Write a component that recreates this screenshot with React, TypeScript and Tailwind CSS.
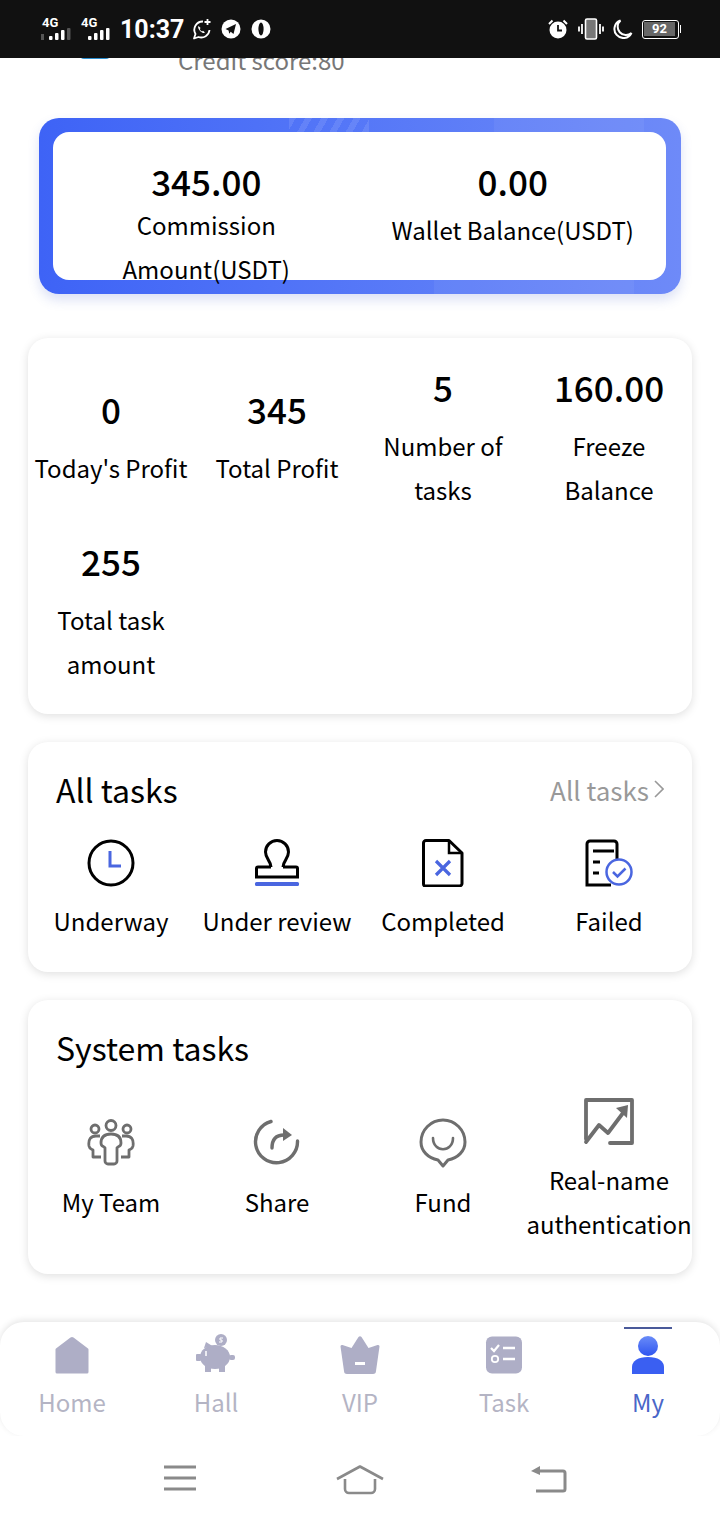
import React from 'react';

const font = { fontFamily: '"Noto Sans CJK SC", "Noto Sans", sans-serif' };

const stats = [
  { value: '0', label: "Today's Profit" },
  { value: '345', label: 'Total Profit' },
  { value: '5', label: 'Number of tasks' },
  { value: '160.00', label: 'Freeze Balance' },
  { value: '255', label: 'Total task amount' },
];

function Signal({ dim }: { dim?: boolean }) {
  return (
    <div className="relative w-[32px] h-[24px]">
      <span className="absolute left-[1px] top-[-3px] text-[13px] font-bold text-white leading-[18px]" style={{ fontFamily: 'Roboto, sans-serif' }}>4G</span>
      <svg width="32" height="24" viewBox="0 0 32 24" className="absolute left-0 top-0">
        {dim && <rect x="0" y="17" width="3" height="6" fill="#555" />}
        <rect x="8" y="19" width="3.5" height="4" rx="1" fill="#fff" />
        <rect x="14" y="16" width="3.5" height="7" rx="1" fill="#fff" />
        <rect x="20" y="13" width="3.5" height="10" rx="1" fill="#fff" />
        <rect x="26" y="11" width="3.5" height="12" rx="1" fill={dim ? '#555' : '#fff'} />
      </svg>
    </div>
  );
}

function StatusBar() {
  return (
    <div className="h-[58px] bg-[#111111] flex items-center justify-between pl-[41px] pr-[39px] relative z-10">
      <div className="flex items-center">
        <Signal dim />
        <div className="ml-[7px]"><Signal /></div>
        <span className="ml-[8px] text-[25px] font-bold text-white leading-none" style={{ fontFamily: 'Roboto, sans-serif' }}>10:37</span>
        <svg className="ml-[7px]" width="21" height="22" viewBox="0 0 21 22" fill="none" stroke="#fff" strokeWidth="1.800">
          <path d="M12 3.500A8.300 8.300 0 0 0 4.500 16L3 20.500l4.500-1.500A8.300 8.300 0 0 0 18.500 12" strokeLinejoin="round" />
          <path d="M7.500 8c-1 1 0 3.500 1.800 5.200S13 15.500 14 14.500l-2-1.800-1 .7c-1-.4-1.800-1.300-2.200-2.300l.8-1z" fill="#fff" stroke="none" />
          <path d="M16.500 1v6M13.500 4h6" />
        </svg>
        <svg className="ml-[9px]" width="20" height="20" viewBox="0 0 20 20">
          <circle cx="10" cy="10" r="9.500" fill="#fff" />
          <path d="M4.500 10L15 5l-2.500 10-2.800-2.200-1.500 2-.6-3.400z" fill="#111" />
        </svg>
        <svg className="ml-[10px]" width="20" height="20" viewBox="0 0 20 20">
          <circle cx="10" cy="10" r="9.500" fill="#fff" />
          <ellipse cx="10" cy="10" rx="2.600" ry="6.500" fill="#111" />
        </svg>
      </div>
      <div className="flex items-center">
        <svg width="22" height="22" viewBox="0 0 22 22">
          <circle cx="11" cy="12" r="8.500" fill="#fff" />
          <path d="M11 7v5.500h4" stroke="#111" strokeWidth="1.800" fill="none" />
          <path d="M2 6l3.500-3.500M20 6l-3.500-3.500" stroke="#fff" strokeWidth="2" />
        </svg>
        <svg className="ml-[9px]" width="26" height="22" viewBox="0 0 26 22">
          <rect x="7.500" y="1" width="11" height="20" rx="1.500" fill="#777" stroke="#fff" strokeWidth="1.600" />
          <path d="M4 6v10M1 8.500v5M22 6v10M25 8.500v5" stroke="#fff" strokeWidth="1.800" />
        </svg>
        <svg className="ml-[9px]" width="20" height="20" viewBox="0 0 20 20" fill="none" stroke="#fff" strokeWidth="2">
          <path d="M7.500 1.500A9 9 0 1 0 18.500 14 8 8 0 0 1 7.500 1.500z" />
        </svg>
        <div className="ml-[9px] w-[37px] h-[19px] rounded-[3px] border-[1.5px] border-white bg-[#111111] p-[1.5px]">
          <div className="w-[31px] h-full bg-[#666666] text-white text-[13px] font-bold leading-[13px] text-center" style={{ fontFamily: 'Roboto, sans-serif' }}>92</div>
        </div>
        <div className="ml-[1px] w-[1.5px] h-[8px] bg-white" />
      </div>
    </div>
  );
}

function BalanceCard() {
  return (
    <div className="relative mx-[39px] mt-[39px] h-[176px] rounded-[20px] p-[14px] pr-[15px] bg-gradient-to-r from-[#3e63f6] to-[#6e8af8] shadow-[0_6px_12px_rgba(60,90,200,0.18)]">
      {/* faint pattern on the frame */}
      <div className="absolute left-[250px] top-0 w-[80px] h-[14px] bg-[repeating-linear-gradient(120deg,rgba(255,255,255,0.10)_0px,rgba(255,255,255,0.10)_6px,transparent_6px,transparent_14px)]" />
      <div className="absolute left-[455px] top-0 w-[150px] h-[14px] bg-white/5" />
      <div className="absolute left-[395px] bottom-0 w-[200px] h-[14px] bg-white/5" />
      <div className="relative h-[148px] rounded-[16px] bg-white grid grid-cols-2 text-center text-black">
        <div className="pt-[25px] px-[60px]">
          <div className="text-[35px] font-medium leading-[54px] -mt-[3px]">345.00</div>
          <div className="text-[24px] leading-[44px] -mt-[5px] whitespace-nowrap">Commission<br />Amount(USDT)</div>
        </div>
        <div className="pt-[25px]">
          <div className="text-[35px] font-medium leading-[54px] -mt-[3px]">0.00</div>
          <div className="text-[24px] leading-[44px] whitespace-nowrap">Wallet Balance(USDT)</div>
        </div>
      </div>
    </div>
  );
}

function StatsCard() {
  return (
    <div className="mx-[28px] mt-[44px] h-[376px] rounded-[20px] bg-white shadow-[0_2px_10px_rgba(0,0,0,0.13)] pt-[23px] grid grid-cols-4 auto-rows-[150px] gap-y-[24px] content-start text-center text-black">
      {stats.map((s) => (
        <div key={s.label} className="flex flex-col justify-center">
          <div className="text-[35px] font-medium leading-[54px]">{s.value}</div>
          <div className="text-[24px] leading-[44px] mt-[10px]">{s.label}</div>
        </div>
      ))}
    </div>
  );
}

const blue = '#4a66e0';

const ClockIcon = () => (
  <svg width="48" height="48" viewBox="0 0 48 48" fill="none">
    <circle cx="24" cy="24" r="22" stroke="#000" strokeWidth="3" />
    <path d="M23 12v15h11" stroke={blue} strokeWidth="3" />
  </svg>
);
const StampIcon = () => (
  <svg width="48" height="48" viewBox="0 0 48 48" fill="none">
    <path d="M18 28c0-6-5.500-8-5.500-15a11.500 11.500 0 0 1 23 0c0 7-5.500 9-5.500 15M18 28H5a1.500 1.500 0 0 0-1.500 1.500V38h41v-8.500A1.500 1.500 0 0 0 43 28H30" stroke="#000" strokeWidth="3" />
    <rect x="2" y="43" width="44" height="4" rx="1.500" fill={blue} />
  </svg>
);
const FileXIcon = () => (
  <svg width="48" height="48" viewBox="0 0 48 48" fill="none">
    <path d="M30 1.500H7a2.500 2.500 0 0 0-2.500 2.500v41a2 2 0 0 0 2 2h34a2.500 2.500 0 0 0 2.500-2.500V14z" stroke="#000" strokeWidth="3" strokeLinejoin="round" />
    <path d="M30 2v12h13" stroke="#000" strokeWidth="2.500" />
    <path d="M17 22l14 14M31 22L17 36" stroke={blue} strokeWidth="3.200" />
  </svg>
);
const ListCheckIcon = () => (
  <svg width="50" height="48" viewBox="0 0 50 48" fill="none">
    <path d="M33 28V5a3 3 0 0 0-3-3H6a3 3 0 0 0-3 3v41h24" stroke="#000" strokeWidth="3" />
    <path d="M9 12h21M9 23h7M9 34h6" stroke="#000" strokeWidth="3" />
    <circle cx="35" cy="33" r="12.500" fill="#fff" stroke={blue} strokeWidth="2.500" />
    <path d="M29 33l4.500 4.500 8-8" stroke={blue} strokeWidth="2.500" />
  </svg>
);

function TasksCard() {
  const items = [
    { label: 'Underway', icon: <ClockIcon /> },
    { label: 'Under review', icon: <StampIcon /> },
    { label: 'Completed', icon: <FileXIcon /> },
    { label: 'Failed', icon: <ListCheckIcon /> },
  ];
  return (
    <div className="mx-[28px] mt-[28px] h-[230px] rounded-[20px] bg-white shadow-[0_2px_10px_rgba(0,0,0,0.13)] pt-[22px] text-black">
      <div className="flex items-center justify-between px-[28px] h-[50px]">
        <span className="text-[32px] leading-[50px]">All tasks</span>
        <span className="flex items-center text-[26px] text-[#999999]">
          All tasks
          <svg className="ml-[5px]" width="10" height="20" viewBox="0 0 10 20" fill="none" stroke="#999" strokeWidth="1.600"><path d="M1 2l8 8-8 8" /></svg>
        </span>
      </div>
      <div className="grid grid-cols-4 text-center mt-[25px]">
        {items.map((it) => (
          <div key={it.label} className="flex flex-col items-center">
            <div className="h-[48px] flex items-center justify-center">{it.icon}</div>
            <div className="text-[24px] leading-[44px] mt-[12px] whitespace-nowrap">{it.label}</div>
          </div>
        ))}
      </div>
    </div>
  );
}

const TeamIcon = () => (
  <svg width="48" height="48" viewBox="0 0 48 48" fill="none" stroke="#6e6e6e" strokeWidth="2.800" strokeLinejoin="round">
    <circle cx="24" cy="6.500" r="5" />
    <circle cx="8" cy="10" r="4" />
    <circle cx="40" cy="10" r="4" />
    <path d="M14 24c0-6 3-9 10-9s10 3 10 9c0 4-3 3-4 5v13a3 3 0 0 1-3 3h-6a3 3 0 0 1-3-3V29c-1-2-4-1-4-5z" />
    <path d="M13 17H9c-5 0-8 3-7 10 .5 3 2 3 4 4v7h8M35 17h4c5 0 8 3 7 10-.5 3-2 3-4 4v7h-8" />
  </svg>
);
const ShareIcon = () => (
  <svg width="48" height="48" viewBox="0 0 48 48" fill="none" stroke="#6e6e6e" strokeWidth="3.400" strokeLinecap="round">
    <path d="M18 2.500A21 21 0 1 0 44.500 22" />
    <path d="M19 29c0-8 3-13 12-13" />
    <path d="M30 9l9 7-9 6z" fill="#6e6e6e" stroke="none" />
  </svg>
);
const FundIcon = () => (
  <svg width="48" height="50" viewBox="0 0 48 50" fill="none" stroke="#6e6e6e" strokeWidth="3">
    <path d="M24 48l-5-6C9 40 2 33 2 24a22 22 0 0 1 44 0c0 9-7 16-17 18z" strokeLinejoin="round" />
    <path d="M14 20c0 15 20 15 20 0" strokeLinecap="round" strokeWidth="2.600" />
  </svg>
);
const ChartIcon = () => (
  <svg width="52" height="48" viewBox="0 0 52 48" fill="none" stroke="#6e6e6e" strokeWidth="3.800" strokeLinejoin="round" strokeLinecap="round">
    <path d="M3 42V3h46v43H27" />
    <path d="M3 45l13-17 9 8 15-20" />
    <path d="M33 11l12-3-1 13z" fill="#6e6e6e" stroke="none" />
  </svg>
);

function SystemCard() {
  const items = [
    { label: 'My Team', icon: <TeamIcon /> },
    { label: 'Share', icon: <ShareIcon /> },
    { label: 'Fund', icon: <FundIcon /> },
    { label: 'Real-name authentication', icon: <ChartIcon /> },
  ];
  return (
    <div className="mx-[28px] mt-[28px] h-[274px] rounded-[20px] bg-white shadow-[0_2px_10px_rgba(0,0,0,0.13)] pt-[22px] text-black">
      <div className="px-[28px] text-[32px] leading-[50px]">System tasks</div>
      <div className="grid grid-cols-4 text-center mt-[24px] h-[150px]">
        {items.map((it) => (
          <div key={it.label} className="flex flex-col items-center justify-center">
            <div className="h-[48px] flex items-center justify-center">{it.icon}</div>
            <div className="text-[24px] leading-[44px] mt-[13px]">{it.label}</div>
          </div>
        ))}
      </div>
    </div>
  );
}

const grey = '#aeaec6';

function BottomNav() {
  const items = [
    {
      label: 'Home',
      icon: (
        <svg width="36" height="38" viewBox="0 0 36 38"><path d="M16.500 1.500a2.500 2.500 0 0 1 3 0L34 12.500a1.500 1.500 0 0 1 .5 1.200V36a1.500 1.500 0 0 1-1.500 1.500H3A1.500 1.500 0 0 1 1.500 36V13.700a1.500 1.500 0 0 1 .5-1.200z" fill={grey} /></svg>
      ),
    },
    {
      label: 'Hall',
      icon: (
        <svg width="40" height="40" viewBox="0 0 40 40">
          <ellipse cx="19" cy="23" rx="15" ry="12" fill={grey} />
          <path d="M8 14l2-6 8 5zM9 32h6v6H9zM23 32h6v6h-6z" fill={grey} />
          <rect x="0" y="20" width="5" height="7" rx="1" fill={grey} />
          <rect x="33" y="21" width="6" height="5" rx="2" fill={grey} />
          <circle cx="25" cy="6" r="6" fill={grey} />
          <path d="M27 4h-3v2h2v2h-3" fill="none" stroke="#fff" strokeWidth="1" />
          <path d="M10 17v5" stroke="#fff" strokeWidth="1.500" />
        </svg>
      ),
    },
    {
      label: 'VIP',
      icon: (
        <svg width="40" height="38" viewBox="0 0 40 38">
          <path d="M18.500 1a2 2 0 0 1 3 0l7 11 9-3a1.500 1.500 0 0 1 2 1.500L36 35a3 3 0 0 1-3 3H7a3 3 0 0 1-3-3L.5 10.500a1.500 1.500 0 0 1 2-1.500l9 3z" fill={grey} />
          <rect x="15" y="26" width="10" height="3" fill="#fff" />
        </svg>
      ),
    },
    {
      label: 'Task',
      icon: (
        <svg width="38" height="38" viewBox="0 0 38 38">
          <rect x="1" y="0.500" width="36" height="37" rx="6" fill={grey} />
          <path d="M6 12l3 3 5-6" stroke="#fff" strokeWidth="2.200" fill="none" />
          <path d="M18 12h12M18 23h12" stroke="#fff" strokeWidth="2.400" />
          <circle cx="10" cy="23" r="3.200" fill="none" stroke="#fff" strokeWidth="1.800" />
        </svg>
      ),
    },
    {
      label: 'My',
      active: true,
      icon: (
        <svg width="34" height="38" viewBox="0 0 34 38">
          <defs>
            <linearGradient id="me" x1="0" y1="0" x2="0" y2="1">
              <stop offset="0" stopColor="#6a8cf8" />
              <stop offset="1" stopColor="#2f55f0" />
            </linearGradient>
          </defs>
          <ellipse cx="17" cy="10" rx="10" ry="10" fill="url(#me)" />
          <path d="M1 38v-7c0-6 6-10 16-10s16 4 16 10v7z" fill="#3a5ff2" />
        </svg>
      ),
    },
  ];
  return (
    <div className="mt-[48px] h-[114px] rounded-[24px] bg-white shadow-[0_-2px_6px_rgba(0,0,0,0.10)] grid grid-cols-5 text-center">
      {items.map((it) => (
        <div key={it.label} className="relative flex flex-col items-center pt-[12px]">
          {it.active && <div className="absolute top-[5px] w-[48px] h-[2px] bg-[#4a5a9a]" />}
          <div className="h-[40px] flex items-end justify-center">{it.icon}</div>
          <div className={it.active ? 'text-[24px] leading-[36px] mt-[10px] text-[#4a66c8]' : 'text-[24px] leading-[36px] mt-[10px] text-[#b4b4c4]'}>{it.label}</div>
        </div>
      ))}
    </div>
  );
}

function SystemNav() {
  return (
    <div className="h-[84px] bg-white flex items-center pt-[4px]">
      <div className="w-full grid grid-cols-3 px-[90px]">
        <div className="flex justify-center">
          <svg width="34" height="26" viewBox="0 0 34 26" stroke="#8a8a8a" strokeWidth="3"><path d="M1 2h32M1 13h32M1 24h32" /></svg>
        </div>
        <div className="flex justify-center">
          <svg width="48" height="30" viewBox="0 0 48 30" fill="none" stroke="#8a8a8a" strokeWidth="2.600" strokeLinejoin="round">
            <path d="M1 14L24 1.500 47 14" />
            <path d="M9 15v10a4 4 0 0 0 4 4h22a4 4 0 0 0 4-4V15" transform="translate(0 -1)" />
          </svg>
        </div>
        <div className="flex justify-center pl-[18px]">
          <svg width="36" height="28" viewBox="0 0 36 28" fill="none" stroke="#8a8a8a" strokeWidth="3">
            <path d="M6 6h26a2 2 0 0 1 2 2v16a2 2 0 0 1-2 2H5" />
            <path d="M0 6l9-5v9z" fill="#8a8a8a" stroke="none" />
          </svg>
        </div>
      </div>
    </div>
  );
}

export default function App() {
  return (
    <div className="w-[720px] h-[1520px] bg-white overflow-hidden" style={font}>
      <StatusBar />
      {/* header is scrolled away under the status bar */}
      <div className="h-[21px] relative overflow-hidden">
        <div className="absolute left-[80px] -top-[3px] w-[30px] h-[4px] rounded-b-full bg-[#2b8fd0]" />
        <div className="absolute left-[178px] -top-[16px] text-[24px] leading-[36px] text-[#777777]">Credit score:80</div>
      </div>
      <BalanceCard />
      <StatsCard />
      <TasksCard />
      <SystemCard />
      <BottomNav />
      <SystemNav />
    </div>
  );
}
